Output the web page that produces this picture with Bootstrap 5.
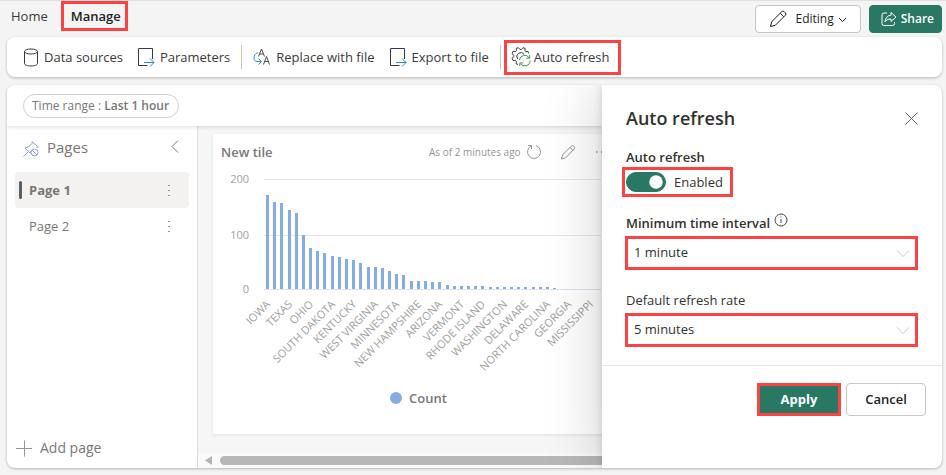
<!DOCTYPE html>
<html lang="en">
<head>
<meta charset="utf-8">
<meta name="viewport" content="width=device-width, initial-scale=1">
<title>Dashboard – Manage</title>
<link href="https://cdn.jsdelivr.net/npm/bootstrap@5.3.0/dist/css/bootstrap.min.css" rel="stylesheet">
<style>
  :root { --brand: #287864; --hot: #fc4343; --dim: #797775; }
  body { background: #f4f4f4; border-top: 1px solid #e0e0e0; font: 13px/20px "Open Sans", "Noto Sans", sans-serif; color: #3b3a39; padding: 0 4px 7px 7px; }
  svg { flex: none; fill: none; stroke: currentColor; }
  .hot { border: 3px solid var(--hot); }
  .top-tab { color: inherit; text-decoration: none; }
  .top-bar { height: 36px; padding-left: 4px; }
  .tab-hot { color: #201f1e; margin-left: 13px; padding: 2px 4px 2px 7px; }
  .btn-top { --bs-btn-font-size: 12px; --bs-btn-padding-y: 0; --bs-btn-border-radius: 4px; height: 28px; }
  .btn-edit, .btn-cancel { background: #fff; border-color: #c8c6c4; color: #201f1e; }
  .btn-edit { --bs-btn-padding-x: 13px; }
  .btn-share { --bs-btn-padding-x: 7px; }
  .btn-brand, .btn-brand:hover { background: var(--brand); border-color: var(--brand); color: #fff; }
  .surface { background: #fff; border-radius: 8px; box-shadow: 0 1px 3px rgba(0,0,0,.26); }
  .tool-bar { height: 40px; margin-bottom: 8px; padding-left: 13px; }
  .tool { border: 0; background: none; color: inherit; height: 35px; padding: 0 3px; gap: 5px; white-space: nowrap; }
  .tool.hot { border: 3px solid var(--hot); margin-left: 3px; padding: 0 8px 0 4px; gap: 3px; }
  .rule { width: 1px; height: 24px; background: #c8c6c4; }
  .filter-bar { height: 41px; padding-left: 16px; box-shadow: 0 1px 4px rgba(0,0,0,.14); z-index: 1; }
  .range-pill { height: 24px; border: 1px solid #d2d0ce; border-radius: 12px; background: #fff; color: var(--dim); padding: 0 9px 0 8px; font-size: 12px; }
  .pages { width: 191px; border-right: 1px solid #dcdcdc; color: var(--dim); }
  .pages-head { padding: 11px 18px 0 16px; height: 46px; font-size: 15px; font-weight: 500; }
  .page-row { height: 36px; margin: 0 8px; padding: 0 18px 0 4px; border-radius: 4px; }
  .page-row.on { background: #f3f2f1; font-weight: 700; }
  .page-row .tick { width: 3px; height: 18px; border-radius: 2px; margin-right: 7px; }
  .page-row.on .tick { background: #605e5c; }
  .page-row a { color: inherit; text-decoration: none; }
  .plain { border: 0; background: none; padding: 0; color: inherit; display: flex; }
  .pin { color: #979de0; }
  .add-page { font-size: 14px; gap: 8px; margin: auto 0 10px 9px; }
  .add-page svg, .tile-head svg, .page-row svg { color: #979593; }
  .canvas { background: #f6f6f6; }
  .tile { background: #fff; margin: 8px 0 0 15px; width: 460px; height: 300px; box-shadow: 0 1px 3px rgba(0,0,0,.1); color: var(--dim); }
  .tile-head { height: 36px; padding-left: 8px; }
  .tile-title { width: 208px; font-weight: 600; font-size: 13px; }
  .stamp { font-size: 10px; width: 97px; color: #979593; white-space: nowrap; }
  .chart text { fill: #a19f9d; stroke: none; font-size: 11px; }
  .legend-key { color: var(--dim); font-weight: 600; gap: 7px; padding: 6px 0 0 177px; }
  .legend-dot { width: 12px; height: 12px; border-radius: 50%; background: #85ade3; }
  .scroller { height: 15px; background: #fafafa; padding-left: 7px; gap: 8px; color: #b5b5b5; }
  .thumb { height: 9px; background: #b7b7b7; border-radius: 5px 0 0 5px; }
  .drawer { width: 340px; background: #fff; z-index: 2; box-shadow: 0 0 8px rgba(0,0,0,.14), 0 0 60px rgba(0,0,0,.2); border-radius: 0 8px 8px 0; color: #323130; }
  .drawer-body { padding: 19px 24px 0 20px; height: 281px; border-bottom: 1px solid #e6e6e6; }
  .drawer-title { font-size: 18px; line-height: 28px; font-weight: 600; padding-left: 4px; margin: 0 0 15px; }
  .drawer-title + .plain { color: #605e5c; }
  .drawer-body label, .field-name { padding-left: 4px; line-height: 20px; }
  .strong { font-weight: 600; }
  .switch-box { width: 111px; height: 30px; padding: 0 1px; gap: 8px; margin-bottom: 16px; }
  .switch-box .form-check-input { width: 40px; height: 20px; margin: 0; box-shadow: none;
    --bs-form-switch-bg: url("data:image/svg+xml,%3csvg xmlns='http://www.w3.org/2000/svg' viewBox='-4 -4 8 8'%3e%3ccircle r='3' fill='%23fff'/%3e%3c/svg%3e");
    background-color: var(--brand); border-color: var(--brand); background-image: var(--bs-form-switch-bg); }
  .switch-box label { padding: 0; }
  .pick { width: 293px; height: 34px; border: 3px solid var(--hot); border-radius: 0; margin: 3px 0 20px 3px; padding: 0 24px 0 6px; font-size: 13px; color: #323130; background-position: right 5px center; background-size: 14px 14px;
    background-image: url("data:image/svg+xml,%3csvg xmlns='http://www.w3.org/2000/svg' viewBox='0 0 14 14'%3e%3cpath d='M1 4.5l6 6 6-6' fill='none' stroke='%23c8c6c4'/%3e%3c/svg%3e"); }
  .drawer-foot { padding: 17px 16px 0 0; gap: 5px; }
  .drawer-foot .btn { --bs-btn-font-size: 13px; --bs-btn-padding-y: 0; font-weight: 600; --bs-btn-border-radius: 4px; height: 33px; }
  .btn-apply, .btn-apply:hover { width: 84px; background: var(--brand); color: #fff; border: 3px solid var(--hot); border-radius: 0; }
  .drawer-foot .btn-apply { --bs-btn-padding-x: 4px; font-weight: 700; }
  .btn-cancel { width: 80px; }
</style>
<script src="https://cdn.jsdelivr.net/npm/bootstrap@5.3.0/dist/js/bootstrap.bundle.min.js"></script>
</head>
<body class="d-flex flex-column min-vh-100">

<header class="top-bar d-flex align-items-start">
  <nav class="d-flex align-items-center pt-0" aria-label="Sections">
    <a class="top-tab" href="#home">Home</a>
    <a class="top-tab tab-hot hot strong" href="#manage" aria-current="page">Manage</a>
  </nav>
  <div class="ms-auto d-flex gap-2 pt-1">
    <button type="button" class="btn btn-top btn-edit d-flex align-items-center">
      <svg width="18" height="18" viewBox="0 0 18 18" class="me-2" aria-hidden="true"><path d="M1.500 16.500l1.200-4.800L12.600 1.800a1.900 1.900 0 0 1 2.800 0l.8.800a1.900 1.900 0 0 1 0 2.800L6.300 15.300zM11.200 3.200l3.600 3.600" stroke-linejoin="round"/></svg>
      Editing
      <svg width="9" height="9" viewBox="0 0 9 9" class="ms-1" aria-hidden="true"><path d="M1 3l3.500 3.500L8 3"/></svg>
    </button>
    <button type="button" class="btn btn-top btn-brand btn-share strong d-flex align-items-center">
      <svg width="16" height="16" viewBox="0 0 16 16" class="ms-1 me-1" aria-hidden="true"><path d="M6 2H3a2 2 0 0 0-2 2v8.500a2 2 0 0 0 2 2h8.500a2 2 0 0 0 2-2V11M10 1.500l5 4.500-5 4.500V8c-3 0-4.700.8-6 2.800C4.300 7 6.500 4.500 10 4.200z" stroke-linejoin="round"/></svg>
      Share
    </button>
  </div>
</header>

<div class="surface tool-bar d-flex align-items-center" role="toolbar" aria-label="Manage">
  <button type="button" class="tool d-flex align-items-center">
    <svg width="16" height="19" viewBox="0 0 16 19" aria-hidden="true"><ellipse cx="8" cy="3.500" rx="6.500" ry="2.500"/><path d="M1.500 3.500v12c0 1.400 2.900 2.500 6.500 2.500s6.500-1.100 6.500-2.500v-12"/></svg>
    <span>Data sources</span>
  </button>
  <button type="button" class="tool d-flex align-items-center ms-2">
    <svg width="18" height="20" viewBox="0 0 18 20" aria-hidden="true"><path d="M15.500 12V1.500h-14v17h9"/><path d="M7 15.500h10M13 11.500l4 4-4 4" stroke="#2b88d8"/></svg>
    <span>Parameters</span>
  </button>
  <span class="rule ms-2"></span>
  <button type="button" class="tool d-flex align-items-center ms-2">
    <svg width="18" height="18" viewBox="0 0 18 18" aria-hidden="true"><path d="M5.500 8.500l3-7.500 3 7.500M6.700 6h3.700M10.500 16.500l3-8 3 8M11.500 13.500h4" stroke-width=".9"/><path d="M5 4.500C2.500 5.500 1 7.500 1 10c0 2 1.300 3.500 3 3.500h4M5.500 10.500l3 3-3 3" stroke="#2b88d8"/></svg>
    <span>Replace with file</span>
  </button>
  <button type="button" class="tool d-flex align-items-center ms-2">
    <svg width="18" height="20" viewBox="0 0 18 20" aria-hidden="true"><path d="M15.500 12V1.500h-14v17h9"/><path d="M7 15.500h10M13 11.500l4 4-4 4" stroke="#2b88d8"/></svg>
    <span>Export to file</span>
  </button>
  <span class="rule ms-2"></span>
  <button type="button" class="tool hot d-flex align-items-center">
    <svg width="20" height="20" viewBox="0 0 20 20" aria-hidden="true"><path d="M7 17.500l-1.800-.7.100-2.500-.8-.9-2.500.1-1-2.300 1.900-1.500V8.300L1 6.700 2 4.300l2.500.2 1-.9-.3-2.200L7.400.7 9 2.500h1.400l1.600-1.800 2.200.8-.2 2.300.8.800 2.300-.1.500 1.700M6.600 12a4 4 0 1 1 6.500-4.700" stroke-linejoin="round"/><path d="M8.500 13a5.200 5.200 0 0 1 9.600-2.300M18.700 8v3.200h-3.500M19 13.500a5.200 5.200 0 0 1-9.600 3M8.800 19.200V16h3.500" stroke="#379c4b"/></svg>
    <span>Auto refresh</span>
  </button>
</div>

<main class="surface d-flex flex-grow-1 overflow-hidden">
  <div class="flex-grow-1 d-flex flex-column overflow-hidden">
    <div class="filter-bar d-flex align-items-center position-relative">
      <button type="button" class="range-pill">Time range : <span class="strong">Last 1 hour</span></button>
    </div>
    <div class="d-flex flex-grow-1">
      <nav class="pages d-flex flex-column flex-shrink-0" aria-label="Pages">
        <div class="pages-head d-flex align-items-start">
          <svg width="16" height="16" viewBox="0 0 16 16" class="pin me-2 mt-1" aria-hidden="true"><path d="M.5 15.500l5-5M8 10l-.8 2.200L2 7l3.500-1L9 2.500 9 .700 15.300 6l-2 .3"/><circle cx="11.500" cy="11.500" r="3.500"/><path d="M9 9l5 5"/></svg>
          <span>Pages</span>
          <button type="button" class="plain ms-auto" aria-label="Collapse pages"><svg width="8" height="17" viewBox="0 0 8 17" aria-hidden="true"><path d="M7 3.500l-6 6 6 6"/></svg></button>
        </div>
        <div class="page-row on d-flex align-items-center"><span class="tick"></span><a href="#page1">Page 1</a><button type="button" class="plain ms-auto" aria-label="Page 1 options"><svg width="4" height="12" viewBox="0 0 4 12" aria-hidden="true"><path d="M1 1.500h2M1 6.500h2M1 11.500h2"/></svg></button></div>
        <div class="page-row d-flex align-items-center"><span class="tick"></span><a href="#page2">Page 2</a><button type="button" class="plain ms-auto" aria-label="Page 2 options"><svg width="4" height="12" viewBox="0 0 4 12" aria-hidden="true"><path d="M1 1.500h2M1 6.500h2M1 11.500h2"/></svg></button></div>
        <button type="button" class="plain add-page align-items-center"><svg width="16" height="17" viewBox="0 0 16 17" aria-hidden="true"><path d="M0 8.500h16M8.500.5v16"/></svg><span>Add page</span></button>
      </nav>
      <section class="canvas flex-grow-1 d-flex flex-column overflow-hidden">
        <article class="tile flex-shrink-0">
          <div class="tile-head d-flex align-items-center">
            <span class="tile-title">New tile</span>
            <span class="stamp">As of 2 minutes ago</span>
            <button type="button" class="plain" aria-label="Refresh tile"><svg width="16" height="16" viewBox="0 0 16 16" aria-hidden="true"><path d="M10 1.700a6.500 6.500 0 1 1-4.700.3M2 1.500h3.500V5"/></svg></button>
            <button type="button" class="plain ms-3" aria-label="Edit tile"><svg width="18" height="16" viewBox="0 0 18 16" aria-hidden="true"><path d="M3.500 15l1-4L13.300 2.200a1.700 1.700 0 0 1 2.500 0l.3.300a1.700 1.700 0 0 1 0 2.500L7.500 14zM12 3.500l3 3" stroke-linejoin="round"/></svg></button>
            <button type="button" class="plain ms-3" aria-label="More options"><svg width="20" height="4" viewBox="0 0 20 4" aria-hidden="true"><path d="M4 2h1.500M9 2h1.500M14 2h1.500" stroke-width="1.500"/></svg></button>
          </div>
          <svg class="chart d-block" id="chart" width="460" height="212" role="img" aria-label="Count by state"></svg>
          <div class="legend-key d-flex align-items-center"><span class="legend-dot"></span>Count</div>
        </article>
        <div class="scroller mt-auto d-flex align-items-center">
          <svg width="7" height="9" viewBox="0 0 7 9" aria-hidden="true"><path d="M7 0v9L0 4.500z" fill="currentColor" stroke="none"/></svg>
          <div class="thumb flex-grow-1"></div>
        </div>
      </section>
    </div>
  </div>

  <aside class="drawer position-relative flex-shrink-0" aria-label="Auto refresh">
    <div class="drawer-body">
      <div class="d-flex align-items-start">
        <h1 class="drawer-title">Auto refresh</h1>
        <button type="button" class="plain ms-auto mt-2" aria-label="Close"><svg width="13" height="13" viewBox="0 0 13 13" aria-hidden="true"><path d="M.5.5l12 12M12.500.5l-12 12"/></svg></button>
      </div>
      <div class="field-name strong">Auto refresh</div>
      <div class="switch-box hot d-flex align-items-center form-switch">
        <input class="form-check-input" type="checkbox" role="switch" id="enabled" checked>
        <label for="enabled">Enabled</label>
      </div>
      <div class="d-flex align-items-start"><label for="interval" class="strong">Minimum time interval</label>
        <svg width="14" height="14" viewBox="0 0 14 14" class="ms-1" aria-hidden="true"><circle cx="7" cy="7" r="6" stroke-width=".9"/><path d="M7 6v4M7 3.500v1" stroke-width=".9"/></svg></div>
      <select id="interval" class="form-select pick"><option>1 minute</option></select>
      <label for="rate">Default refresh rate</label>
      <select id="rate" class="form-select pick"><option>5 minutes</option></select>
    </div>
    <div class="drawer-foot d-flex justify-content-end">
      <button type="button" class="btn btn-apply">Apply</button>
      <button type="button" class="btn btn-cancel">Cancel</button>
    </div>
  </aside>
</main>

<script>
  // Bars are listed as pixel heights; 55px is 100 on the axis.
  const bars = [94,87,86,79,76,54,41,38,36,33,32,30,29,26,22,22,21,18,15,14,8,8,8,7,7,4,3,3,3,3,3,2,2,2,2,2,2,2,2,2,1];
  const states = ["IOWA","TEXAS","OHIO","SOUTH DAKOTA","KENTUCKY","WEST VIRGINIA","MINNESOTA","NEW HAMPSHIRE","ARIZONA","VERMONT","RHODE ISLAND","WASHINGTON","DELAWARE","NORTH CAROLINA","GEORGIA","MISSISSIPPI"];
  const base = 119, left = 51;
  let out = "";
  [[200, 9], [100, 65], [0, base]].forEach(([v, y]) => {
    out += `<path d="M${left} ${y + .5}H388" stroke="${v ? "#e6e6e6" : "#dfe2ee"}"/><text x="36" y="${y + 4}" text-anchor="end">${v}</text>`;
  });
  bars.forEach((h, i) => {
    const x = Math.round(left + 2 + i * 7.18);
    out += `<rect x="${x}" y="${base - h}" width="3" height="${h}" fill="#85ade3" stroke="none"/>`;
  });
  states.forEach((name, i) => {
    out += `<text transform="translate(${Math.round(left + 7 + i * 21.5)} 135) rotate(-45)" text-anchor="end">${name}</text>`;
  });
  document.getElementById("chart").innerHTML = out;
</script>
</body>
</html>
